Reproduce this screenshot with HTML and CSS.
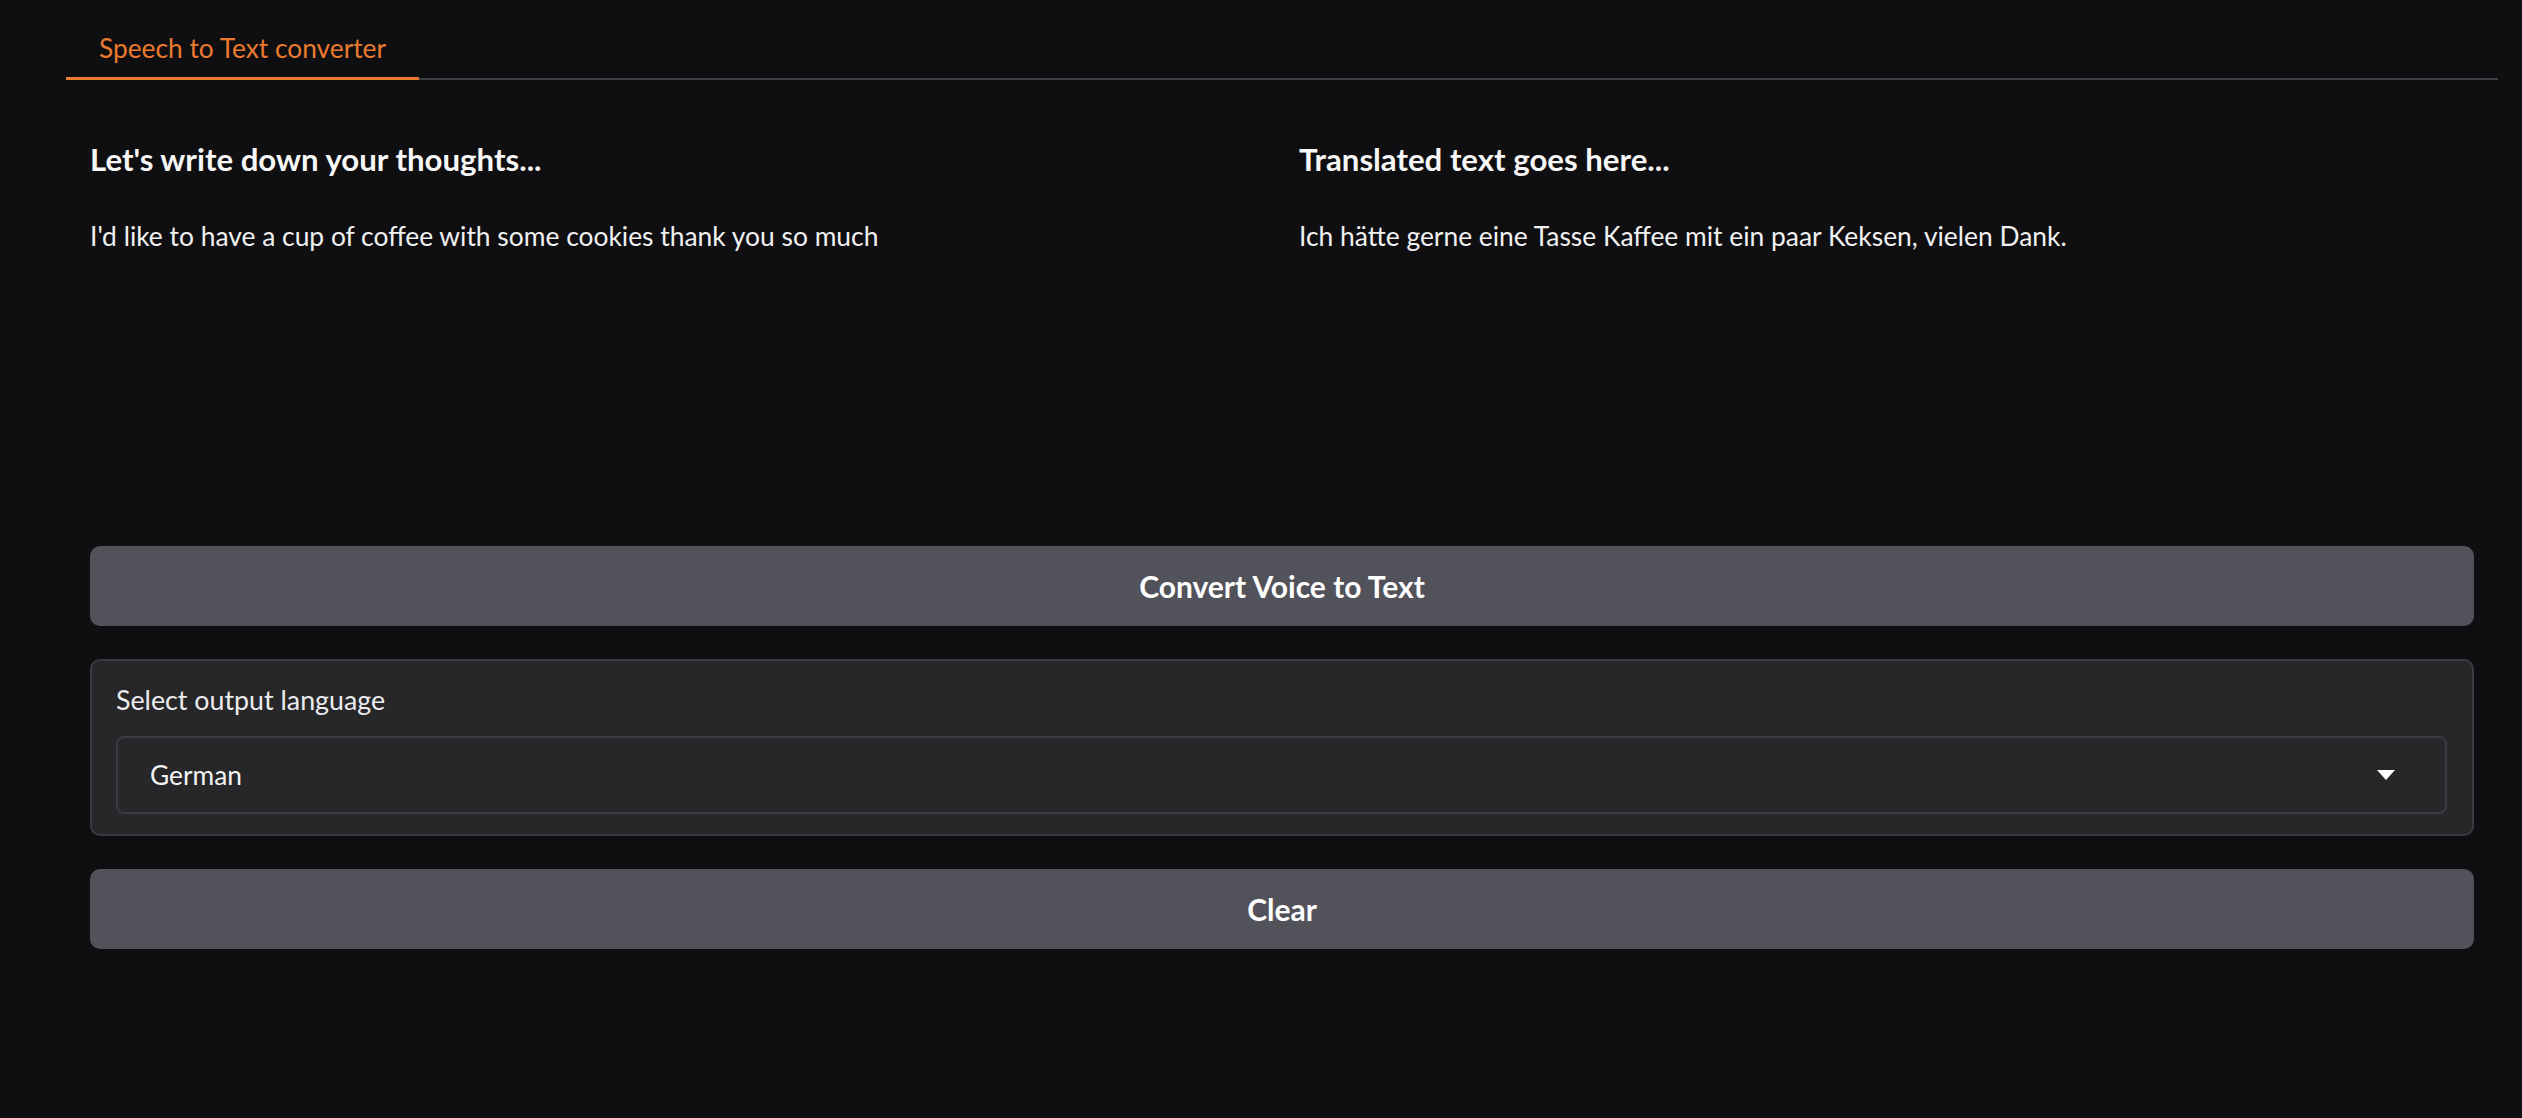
FILE: index.html
```html
<!DOCTYPE html>
<html lang="en">
<head>
<meta charset="utf-8">
<title>Speech to Text converter</title>
<link rel="stylesheet" href="styles.css">
</head>
<body>
<div class="app">
  <nav class="tab-nav">
    <button class="tab selected">Speech to Text converter</button>
  </nav>
  <main class="panel">
    <div class="row">
      <div class="col">
        <h3 class="md-heading">Let's write down your thoughts...</h3>
        <p class="md-text">I'd like to have a cup of coffee with some cookies thank you so much</p>
      </div>
      <div class="col">
        <h3 class="md-heading">Translated text goes here...</h3>
        <p class="md-text">Ich hätte gerne eine Tasse Kaffee mit ein paar Keksen, vielen Dank.</p>
      </div>
    </div>
    <button class="btn">Convert Voice to Text</button>
    <div class="block">
      <label class="block-label">Select output language</label>
      <div class="dropdown">
        <span class="dropdown-value">German</span>
        <svg class="dropdown-arrow" width="18" height="10" viewBox="0 0 18 10"><polygon points="0,0 18,0 9,10" fill="#ffffff"/></svg>
      </div>
    </div>
    <button class="btn">Clear</button>
  </main>
</div>
</body>
</html>
```
FILE: styles.css
```css
* { box-sizing: border-box; }
html, body {
  margin: 0;
  padding: 0;
  background: #0f0f11;
  height: 100%;
}
body {
  font-family: Lato, "Open Sans", sans-serif;
  color: #f4f4f5;
}
.app {
  padding: 21px 24px 0 66px;
}
.tab-nav {
  display: flex;
  border-bottom: 2px solid #3f3f46;
}
.tab {
  font-family: inherit;
  font-size: 26.3px;
  line-height: 38px;
  font-weight: 400;
  color: #ea7a2f;
  background: none;
  border: none;
  border-bottom: 3px solid #ea7a2f;
  margin-bottom: -2px;
  padding: 8px 33px 10px 33px;
  cursor: pointer;
}
.panel {
  display: flex;
  flex-direction: column;
  gap: 33px;
  padding: 59px 24px 0 24px;
}
.row {
  display: grid;
  grid-template-columns: 1fr 1fr;
  column-gap: 34px;
  min-height: 374px;
  align-items: start;
}
.md-heading {
  margin: 0;
  font-size: 31.2px;
  line-height: 40px;
  font-weight: 700;
  color: #f7f7f8;
}
.md-text {
  margin: 39px 0 0 0;
  font-size: 26.4px;
  line-height: 36px;
  color: #f1f1f2;
}
.btn {
  font-family: inherit;
  height: 80px;
  width: 100%;
  font-size: 30px;
  font-weight: 700;
  color: #ffffff;
  background: #52525b;
  border: none;
  border-radius: 10px;
  cursor: pointer;
}
.block {
  display: flex;
  flex-direction: column;
  background: #27272a;
  border: 2px solid #3a3a40;
  border-radius: 10px;
  padding: 21px 25px 20px 24px;
}
.block-label {
  font-size: 26.8px;
  line-height: 36px;
  color: #ececee;
}
.dropdown {
  margin-top: 18px;
  height: 78px;
  display: flex;
  align-items: center;
  justify-content: space-between;
  border: 2px solid #3a3a40;
  border-radius: 8px;
  background: #27272a;
  padding: 0 50px 0 32px;
}
.dropdown-value {
  font-size: 26.3px;
  line-height: 74px;
  color: #f4f4f5;
}
.dropdown-arrow {
  display: block;
}
```
